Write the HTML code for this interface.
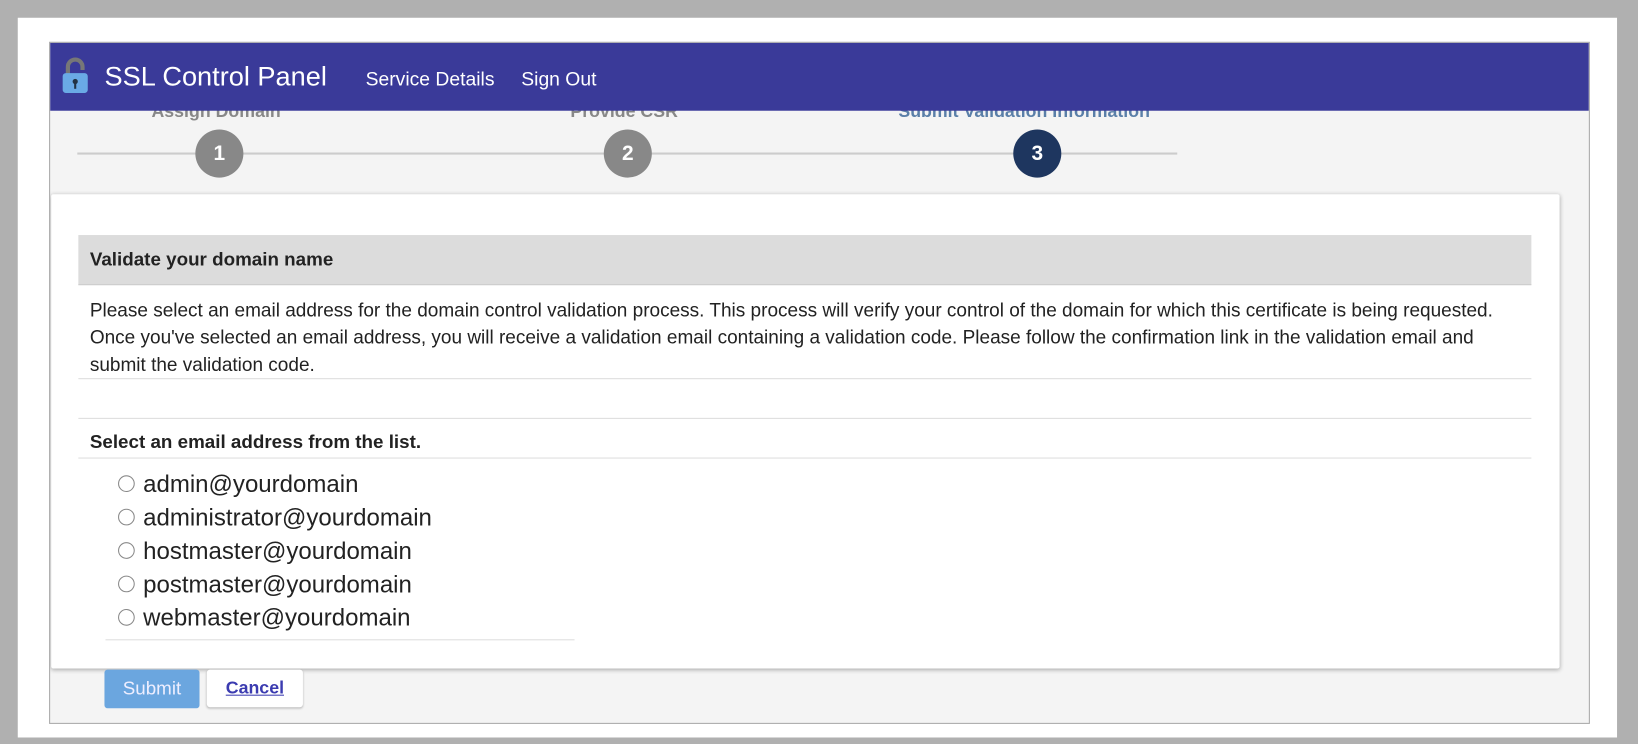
<!DOCTYPE html>
<html><head><style>
body{margin:0;width:1638px;height:744px;background:#b0b0b0;position:relative;overflow:hidden;font-family:"Liberation Sans",sans-serif}
#s{position:absolute;left:0;top:0;width:1568px;height:712px;transform:scale(1.0446);transform-origin:0 0}
.a{position:absolute}
.w{left:17px;top:17px;width:1531px;height:689px;background:#fff}
.f{left:47px;top:40px;width:1473px;height:651px;border:1px solid #a8a8a8;background:#f4f4f4;overflow:hidden}
.hd{left:0;top:0;width:1473px;height:65px;background:#3a3a99;color:#fff}
.c{width:46px;height:46px;border-radius:50%;background:#888;color:#fff;font-weight:bold;font-size:20px;text-align:center;line-height:46px}
.lab{font-weight:bold;font-size:17px;color:#888;top:56px}
.card{left:1px;top:145px;width:1444px;height:454px;background:#fff;box-shadow:0 1px 4px rgba(0,0,0,.3);border-radius:2px}
.p{font-size:18.2px;color:#222;line-height:26px;white-space:nowrap}
.r{font-size:23px;color:#222;left:64px}
.r span{display:inline-block;width:14px;height:14px;border:1.5px solid #888;border-radius:50%;vertical-align:0px;margin-right:8px}
.ln{height:1px;background:#ddd}
</style></head><body>
<div id="s">
<div class="a w"></div>
<div class="a f">
 <div class="a lab" style="left:97px">Assign Domain</div>
 <div class="a lab" style="left:498px">Provide CSR</div>
 <div class="a lab" style="left:812px;color:#5a7fa8">Submit Validation Information</div>
 <div class="a hd">
  <svg class="a" style="left:9px;top:13px" width="30" height="36" viewBox="0 0 30 36"><path d="M8 17V10a7 7 0 0 1 14 0v3" fill="none" stroke="#777" stroke-width="4"/><rect x="3" y="16" width="24" height="19" rx="3" fill="#6aaae6"/><circle cx="15" cy="24" r="2.5" fill="#234"/><rect x="14" y="25" width="2" height="6" fill="#234"/></svg>
  <div class="a" style="left:52px;top:17px;font-size:26px">SSL Control Panel</div>
  <div class="a" style="left:302px;top:24px;font-size:18.5px">Service Details</div>
  <div class="a" style="left:451px;top:24px;font-size:18.5px">Sign Out</div>
 </div>
 <div class="a" style="left:26px;top:105px;width:1053px;height:2px;background:#ccc"></div>
 <div class="a c" style="left:139px;top:83px">1</div>
 <div class="a c" style="left:530px;top:83px">2</div>
 <div class="a c" style="left:922px;top:83px;background:#1e365f">3</div>
 <div class="a card">
  <div class="a" style="left:26px;top:39px;width:1391px;height:47px;background:#dcdcdc;border-bottom:1px solid #ccc"></div>
  <div class="a" style="left:37px;top:52px;font-weight:bold;font-size:18px;color:#222">Validate your domain name</div>
  <div class="a p" style="left:37px;top:98px">Please select an email address for the domain control validation process. This process will verify your control of the domain for which this certificate is being requested.<br>Once you've selected an email address, you will receive a validation email containing a validation code. Please follow the confirmation link in the validation email and<br>submit the validation code.</div>
  <div class="a ln" style="left:26px;top:176px;width:1391px"></div>
  <div class="a ln" style="left:26px;top:214px;width:1391px"></div>
  <div class="a" style="left:37px;top:227px;font-weight:bold;font-size:18px;color:#222">Select an email address from the list.</div>
  <div class="a ln" style="left:26px;top:252px;width:1391px"></div>
  <div class="a r" style="top:264px"><span></span>admin@yourdomain</div>
  <div class="a r" style="top:296px"><span></span>administrator@yourdomain</div>
  <div class="a r" style="top:328px"><span></span>hostmaster@yourdomain</div>
  <div class="a r" style="top:360px"><span></span>postmaster@yourdomain</div>
  <div class="a r" style="top:392px"><span></span>webmaster@yourdomain</div>
  <div class="a ln" style="left:52px;top:426px;width:449px"></div>
 </div>
 <div class="a" style="left:52px;top:600px;width:91px;height:37px;background:#6ba6df;border-radius:3px;color:#eef;font-size:18px;text-align:center;line-height:37px">Submit</div>
 <div class="a" style="left:150px;top:600px;width:92px;height:36px;background:#fff;border-radius:3px;box-shadow:0 1px 2px rgba(0,0,0,.25);color:#3b3bb0;font-weight:bold;font-size:17px;text-align:center;line-height:36px;text-decoration:underline">Cancel</div>
</div>
</div>
</body></html>
